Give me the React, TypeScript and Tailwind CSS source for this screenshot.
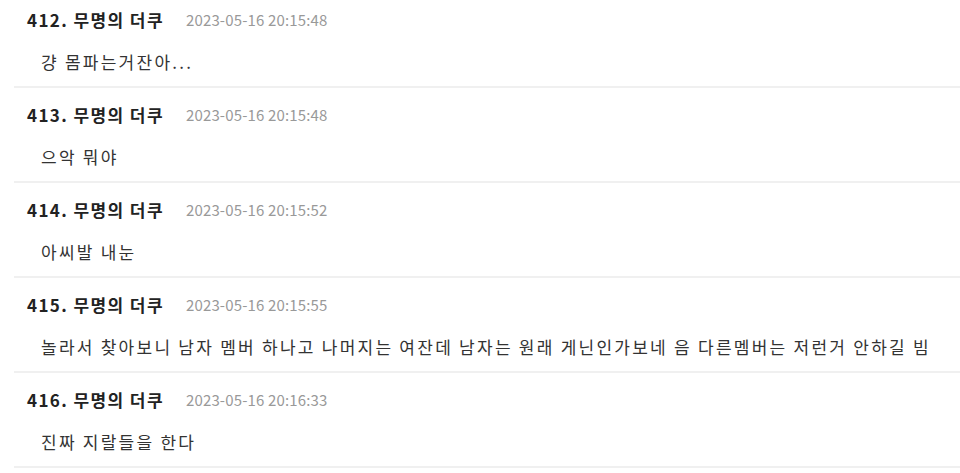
import React from "react";

const items = [
  { n: 412, date: "2023-05-16 20:15:48", body: "걍 몸파는거잔아..." },
  { n: 413, date: "2023-05-16 20:15:48", body: "으악 뭐야" },
  { n: 414, date: "2023-05-16 20:15:52", body: "아씨발 내눈" },
  {
    n: 415,
    date: "2023-05-16 20:15:55",
    body: "놀라서 찾아보니 남자 멤버 하나고 나머지는 여잔데 남자는 원래 게닌인가보네 음 다른멤버는 저런거 안하길 빔",
  },
  { n: 416, date: "2023-05-16 20:16:33", body: "진짜 지랄들을 한다" },
];

export default function App() {
  return (
    <div
      className="w-[960px] h-[473px] overflow-hidden bg-white"
      style={{ fontFamily: '"Noto Sans CJK KR", "Noto Sans", sans-serif' }}
    >
      <div className="ml-[14px] -mt-[7px]">
        {items.map((it) => (
          <div key={it.n} className="border-b-2 border-[#f0f0f0] pt-[17px] pb-[12px] pl-[13px]">
            <div className="flex items-center h-[20px]">
              <span className="text-[17px] font-bold text-[#222] leading-[20px] tracking-[1.4px]">
                {it.n}. 무명의 더쿠
              </span>
              <span className="ml-[22px] text-[15px] text-[#999] leading-[20px] tracking-[0.15px]">
                {it.date}
              </span>
            </div>
            <div className="mt-[20px] pl-[14px] text-[17px] text-[#333] leading-[24px] h-[24px] tracking-[2.25px]">
              {it.body}
            </div>
          </div>
        ))}
      </div>
    </div>
  );
}
